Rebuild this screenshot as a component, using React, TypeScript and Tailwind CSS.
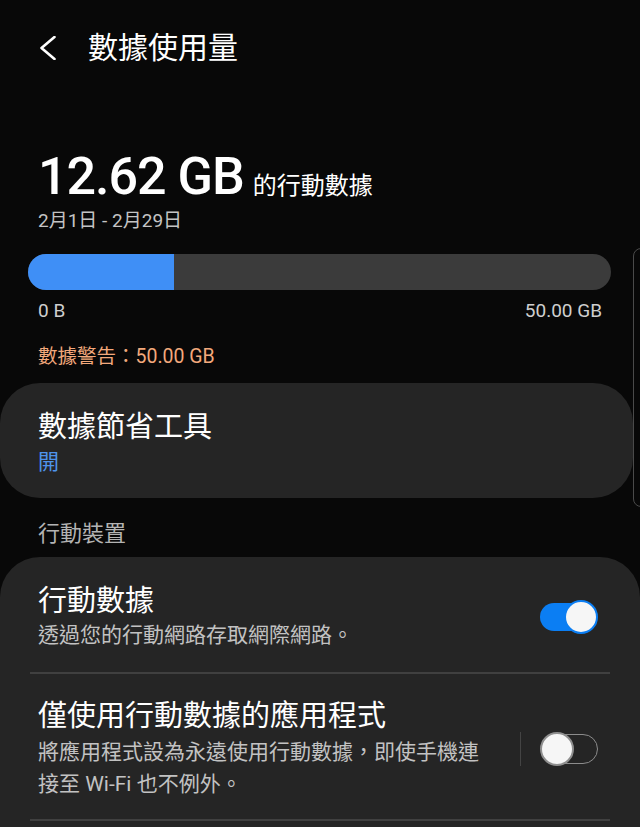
import React from "react";

function Toggle({ on }: { on: boolean }) {
  if (on) {
    return (
      <div className="relative w-[58px] h-[34px] flex items-center">
        <div className="w-[50px] h-[28px] rounded-full bg-[#0b7ef3]" />
        <div className="absolute right-0 top-0 w-[34px] h-[34px] rounded-full bg-[#f6f6f6] border-[2px] border-[#0b7ef3]" />
      </div>
    );
  }
  return (
    <div className="relative w-[58px] h-[34px] flex items-center justify-end">
      <div className="w-[56px] h-[30px] rounded-full border-[1.5px] border-[#8c8c8c]" />
      <div className="absolute left-0 top-0 w-[34px] h-[34px] rounded-full bg-[#f6f6f6] border-[2px] border-[#8f8f8f]" />
    </div>
  );
}

export default function App() {
  return (
    <div className="relative w-[640px] h-[827px] overflow-hidden bg-[#080808] text-white font-[family-name:Roboto,'Noto_Sans_CJK_TC',sans-serif]">
      <header className="flex items-center h-[96px] pl-[36px]">
        <svg width="24" height="24" viewBox="0 0 24 24" fill="none">
          <polyline
            points="18.5,1 5.5,12 18.5,23"
            stroke="#ffffff"
            strokeWidth="2.6"
            strokeLinecap="round"
            strokeLinejoin="round"
          />
        </svg>
        <h1 className="ml-[28px] text-[30px] leading-[36px] font-normal">數據使用量</h1>
      </header>

      <div className="mt-[55px] px-[38px] flex items-baseline">
        <span className="text-[52px] leading-[52px] font-medium tracking-[-1px]">12.62 GB</span>
        <span className="ml-[9px] text-[24px] leading-[30px]">的行動數據</span>
      </div>
      <div className="mt-[6px] px-[38px] text-[19px] leading-[24px] text-[#c4c4c4]">2月1日 - 2月29日</div>

      <div className="mt-[21px] ml-[28px] w-[583px] h-[36px] rounded-full bg-[#3b3b3b] overflow-hidden flex">
        <div className="w-[146px] h-full bg-[#3f8ff6]" />
      </div>
      <div className="mt-[9px] pl-[38px] pr-[38px] flex justify-between text-[19px] leading-[24px] text-[#cfcfcf]">
        <span>0 B</span>
        <span>50.00 GB</span>
      </div>

      <div className="mt-[22px] px-[38px] text-[19.5px] leading-[24px] text-[#f3a97c]">數據警告：50.00 GB</div>

      <div className="mt-[14px] w-[633px] rounded-[40px] bg-[#252525] pt-[26px] pb-[23px] px-[38px]">
        <div className="text-[29px] leading-[36px]">數據節省工具</div>
        <div className="mt-[4px] text-[21px] leading-[26px] text-[#4f94ea]">開</div>
      </div>

      <div className="mt-[22px] px-[38px] text-[22px] leading-[28px] text-[#b3b3b3]">行動裝置</div>

      <div className="mt-[9px] rounded-t-[40px] bg-[#252525] h-[300px]">
        <div className="flex items-center pl-[38px] pr-[42px] pt-[26px] pb-[22px]">
          <div className="flex-1">
            <div className="text-[29px] leading-[36px]">行動數據</div>
            <div className="mt-[1px] text-[21px] leading-[30px] text-[#c2c2c2]">透過您的行動網路存取網際網路。</div>
          </div>
          <Toggle on />
        </div>
        <div className="mx-[30px] h-[2px] bg-[#404040]" />
        <div className="flex items-center pl-[38px] pr-[42px] pt-[24px] pb-[19px]">
          <div className="flex-1">
            <div className="text-[29px] leading-[36px]">僅使用行動數據的應用程式</div>
            <div className="mt-[2px] w-[458px] text-[21px] leading-[32px] text-[#c2c2c2]">
              將應用程式設為永遠使用行動數據，即使手機連接至 Wi-Fi 也不例外。
            </div>
          </div>
          <div className="w-[1px] h-[34px] bg-[#444444] mr-[19px]" />
          <Toggle on={false} />
        </div>
        <div className="mx-[30px] h-[2px] bg-[#404040]" />
      </div>

      <div className="absolute left-[633px] top-[248px] w-[20px] h-[259px] rounded-[8px] border border-[#4a4a4a]" />
    </div>
  );
}
